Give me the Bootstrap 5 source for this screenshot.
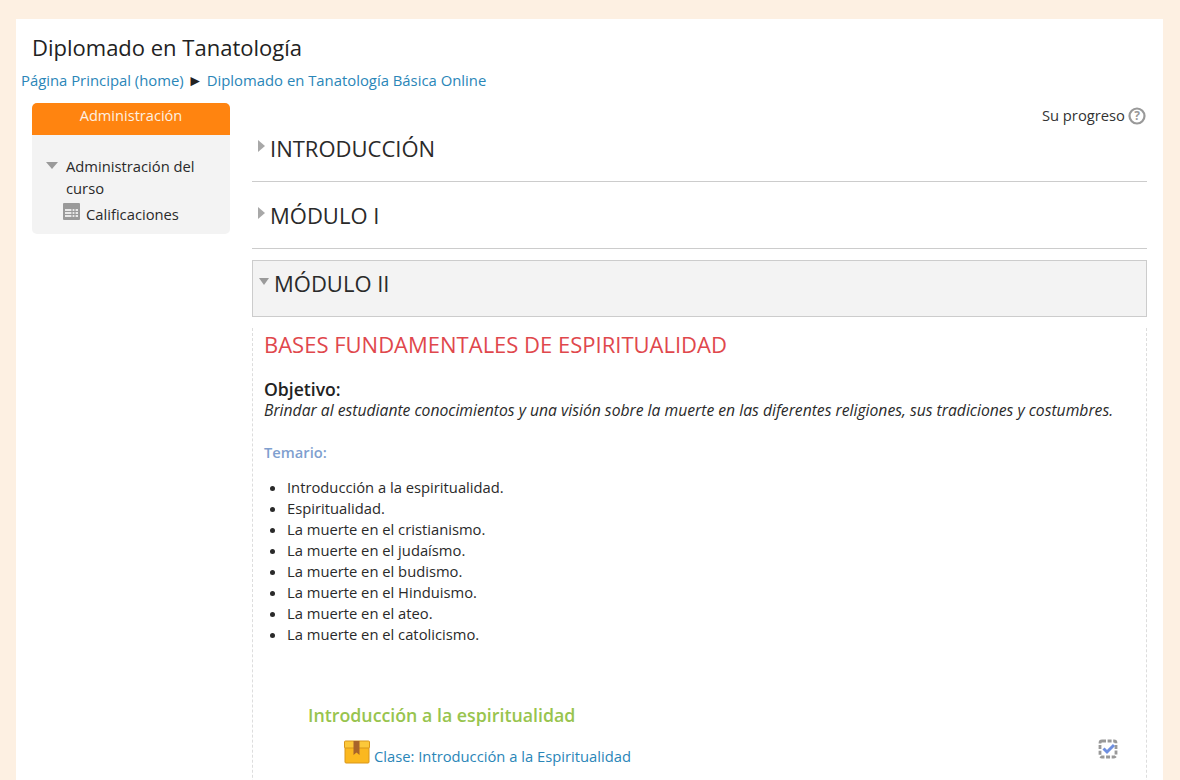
<!DOCTYPE html>
<html lang="es">
<head>
<meta charset="utf-8">
<title>Diplomado en Tanatología</title>
<link href="https://cdn.jsdelivr.net/npm/bootstrap@5.3.0/dist/css/bootstrap.min.css" rel="stylesheet">
<style>
html,body{height:780px;overflow:hidden}
body{background:#fdf0e2;font-family:"Open Sans",sans-serif;font-size:14.75px;color:#2a2a2a;padding:19px 17px 0 16px;line-height:21px}
a{color:#2a86b8;text-decoration:none}
.sheet{background:#fff;height:761px;overflow:hidden}
.course-title{font-size:22px;line-height:28px;font-weight:400;margin:0;padding:14px 0 0 16px;color:#222}
.crumbs{padding:9px 0 0 5px;line-height:21px;font-size:14.85px}
.crumbs .sep{font-size:15.5px;color:#222}
.layout{padding:12px 16px 0 16px;gap:22px}
.side{width:198px;flex:none}
.side-head{background:#ff8410;color:#fdf0e2;height:32px;text-align:center;border-radius:5px 5px 0 0;padding-top:2px;font-size:14.6px}
.side-body{background:#f3f3f3;height:99px;border-radius:0 0 5px 5px;padding:20px 20px 0 14px;line-height:22px}
.tri-big{width:0;height:0;border-left:6.5px solid transparent;border-right:6.5px solid transparent;border-top:7px solid #9a9a9a;margin-top:7px;flex:none}
.side-sub{padding-left:17px;gap:6px;line-height:20px;height:20px}
.side-sub svg{margin-top:4px;flex:none}
.side-sub span{margin-top:5px}
.main-col{min-width:0;flex:1}
.progress-line{height:21px;margin-top:2px;color:#333;padding-right:1px;gap:3px}
.sec{height:56px;border-bottom:1px solid #ccc;padding-top:8px;gap:5px;font-size:22px;line-height:28px}
.sec + .sec{height:67px;padding-top:19px}
.tri-side{width:0;height:0;border-top:6px solid transparent;border-bottom:6px solid transparent;border-left:7px solid #a8a8a8;margin-top:6px;margin-left:6px;flex:none}
.sec-open{margin-top:11px;height:57px;background:#f3f3f3;border:1px solid #ccc;padding:8px 0 0 6px;gap:5px;font-size:22px;line-height:28px}
.tri-down{width:0;height:0;border-left:5.5px solid transparent;border-right:5.5px solid transparent;border-top:7px solid #9a9a9a;margin-top:9px;flex:none}
.sec-body{margin-top:11px;border-left:1px dashed #ddd;border-right:1px dashed #ddd;height:500px;padding:0 11px}
.red-head{color:#e0474c;font-size:22px;line-height:28px;padding-top:2px;margin:0;font-weight:400}
.goal{font-size:17.6px;font-weight:600;line-height:22px;margin-top:20px;color:#222}
.goal-text{font-style:italic;font-size:15.7px;line-height:20px;margin-top:0}
.temario{color:#7f9fcf;font-weight:600;line-height:21px;margin-top:22px;font-size:14.7px}
.topics{margin:14px 0 0;padding-left:23px;line-height:21px;font-size:14.75px}
.green-head{color:#98c44e;font-size:17.8px;font-weight:600;line-height:22px;margin:59px 0 0 44px}
.lesson{margin:15px 0 0 80px;gap:4px;line-height:21px;padding-top:5px}
.lesson svg{margin-top:-6px;flex:none}
.lesson .check{margin:-7px 17px 0 auto}
</style>
</head>
<body>
<div class="sheet">
  <h1 class="course-title">Diplomado en Tanatología</h1>
  <div class="crumbs"><a href="#">Página Principal (home)</a> <span class="sep">►</span> <a href="#">Diplomado en Tanatología Básica Online</a></div>
  <div class="layout d-flex">
    <aside class="side">
      <div class="side-head">Administración</div>
      <div class="side-body">
        <div class="d-flex gap-2"><span class="tri-big"></span><span>Administración del curso</span></div>
        <div class="d-flex side-sub">
          <svg width="17" height="17" viewBox="0 0 17 17"><rect width="17" height="17" rx="1" fill="#9a9a9a"/><rect x="2" y="6" width="13" height="8" fill="#e8e8e8"/><path d="M2 8.5h13M2 11.5h13M9 6v8M12 6v8" stroke="#9a9a9a" stroke-width="1.2"/></svg>
          <span>Calificaciones</span>
        </div>
      </div>
    </aside>
    <main class="main-col">
      <div class="progress-line d-flex justify-content-end align-items-center">Su progreso
        <svg width="18" height="18" viewBox="0 0 18 18"><circle cx="9" cy="9" r="7.5" fill="none" stroke="#999" stroke-width="2.2"/><text x="9" y="13.2" text-anchor="middle" font-size="12" font-weight="700" font-family="Open Sans" fill="#999">?</text></svg>
      </div>
      <div class="sec d-flex"><span class="tri-side"></span><span>INTRODUCCIÓN</span></div>
      <div class="sec d-flex"><span class="tri-side"></span><span>MÓDULO I</span></div>
      <div class="sec-open d-flex"><span class="tri-down"></span><span>MÓDULO II</span></div>
      <div class="sec-body">
        <h2 class="red-head">BASES FUNDAMENTALES DE ESPIRITUALIDAD</h2>
        <div class="goal">Objetivo:</div>
        <div class="goal-text">Brindar al estudiante conocimientos y una visión sobre la muerte en las diferentes religiones, sus tradiciones y costumbres.</div>
        <div class="temario">Temario:</div>
        <ul class="topics">
          <li>Introducción a la espiritualidad.</li>
          <li>Espiritualidad.</li>
          <li>La muerte en el cristianismo.</li>
          <li>La muerte en el judaísmo.</li>
          <li>La muerte en el budismo.</li>
          <li>La muerte en el Hinduismo.</li>
          <li>La muerte en el ateo.</li>
          <li>La muerte en el catolicismo.</li>
        </ul>
        <div class="green-head">Introducción a la espiritualidad</div>
        <div class="lesson d-flex">
          <svg width="26" height="24" viewBox="0 0 26 24"><rect x="1" y="5" width="24" height="18" rx="1" fill="#fbb81f" stroke="#d9961a"/><rect x="0.5" y="1" width="25" height="7" rx="1" fill="#fcc83a" stroke="#d9961a"/><path d="M9.5 1h6v14l-3-2.5-3 2.5z" fill="#a8642a"/></svg>
          <a href="#">Clase: Introducción a la Espiritualidad</a>
          <svg class="check" width="20" height="20" viewBox="0 0 20 20"><rect x="2" y="2" width="16" height="16" rx="2" fill="none" stroke="#999" stroke-width="2.8" stroke-dasharray="4 1.6"/><path d="M5.5 9.5l3.5 3.5 7-7" fill="none" stroke="#6f8fe0" stroke-width="3"/></svg>
        </div>
      </div>
    </main>
  </div>
</div>
<script src="https://cdn.jsdelivr.net/npm/bootstrap@5.3.0/dist/js/bootstrap.bundle.min.js"></script>
</body>
</html>
